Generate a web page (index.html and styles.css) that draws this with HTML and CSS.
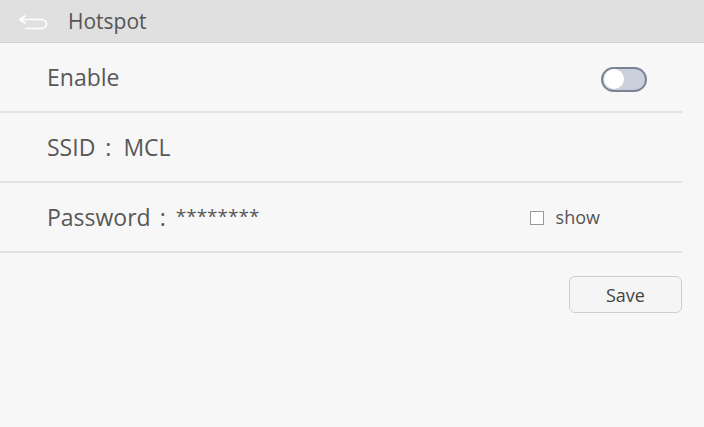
FILE: index.html
```html
<!DOCTYPE html>
<html>
<head>
<meta charset="utf-8">
<link rel="stylesheet" href="styles.css">
</head>
<body>
<div class="page">
  <header class="topbar">
    <svg class="back" width="32" height="16" viewBox="0 0 32 16">
      <path d="M7 2 L2 5.5 L7 9 M2 5.5 H24 a4.5 4.5 0 0 1 0 9 H8" fill="none" stroke="#ffffff" stroke-width="1.6" stroke-linecap="round" stroke-linejoin="round"/>
    </svg>
    <span class="title">Hotspot</span>
  </header>
  <div class="list">
    <div class="row">
      <span class="label">Enable</span>
      <span class="toggle"><span class="knob"></span></span>
    </div>
    <div class="row">
      <span class="label">SSID<span class="colon wide">:</span>MCL</span>
    </div>
    <div class="row">
      <span class="label">Password<span class="colon">:</span><span class="stars">********</span></span>
      <span class="show"><span class="box"></span>show</span>
    </div>
  </div>
  <div class="actions">
    <button class="save">Save</button>
  </div>
</div>
</body>
</html>
```
FILE: styles.css
```css
html, body {
  margin: 0;
  padding: 0;
  background: #f7f7f7;
}
body {
  font-family: "Open Sans", "Noto Sans", sans-serif;
  color: #555;
}
.page {
  width: 704px;
  height: 427px;
}
.topbar {
  height: 42px;
  background: #e0e0e0;
  border-bottom: 1px solid #d2d2d2;
  display: flex;
  align-items: center;
  padding-left: 18px;
}
.back {
  margin-top: 2px;
}
.title {
  margin-left: 18px;
  font-size: 21px;
  color: #555;
}
.list {
  width: 682px;
}
.row {
  height: 68px;
  border-bottom: 2px solid #e2e2e2;
  display: flex;
  align-items: center;
  padding-left: 47px;
}
.label {
  font-size: 23px;
  color: #585858;
  flex: 1;
}
.colon {
  display: inline-block;
  margin: 0 10px 0 9px;
}
.colon.wide {
  margin: 0 12px 0 10px;
}
.stars {
  font-size: 19px;
  position: relative;
  top: -3px;
}
.toggle {
  width: 41px;
  height: 21px;
  border: 2px solid #7b8496;
  background: #c9d0dc;
  border-radius: 13px;
  margin-right: 35px;
  display: flex;
  align-items: center;
  padding-left: 1px;
  margin-top: 4px;
}
.knob {
  width: 20px;
  height: 20px;
  border-radius: 50%;
  background: #fff;
}
.show {
  display: flex;
  align-items: center;
  font-size: 18px;
  color: #555;
  margin-right: 82px;
}
.box {
  width: 12px;
  height: 12px;
  border: 1px solid #999;
  background: #fff;
  margin-right: 12px;
  margin-top: 2px;
}
.actions {
  width: 682px;
  display: flex;
  justify-content: flex-end;
  padding-top: 23px;
}
.save {
  width: 113px;
  height: 37px;
  border: 1px solid #cfcfcf;
  border-radius: 6px;
  background: #f5f5f5;
  font-family: "Open Sans", "Noto Sans", sans-serif;
  font-size: 18px;
  color: #444;
}
```
